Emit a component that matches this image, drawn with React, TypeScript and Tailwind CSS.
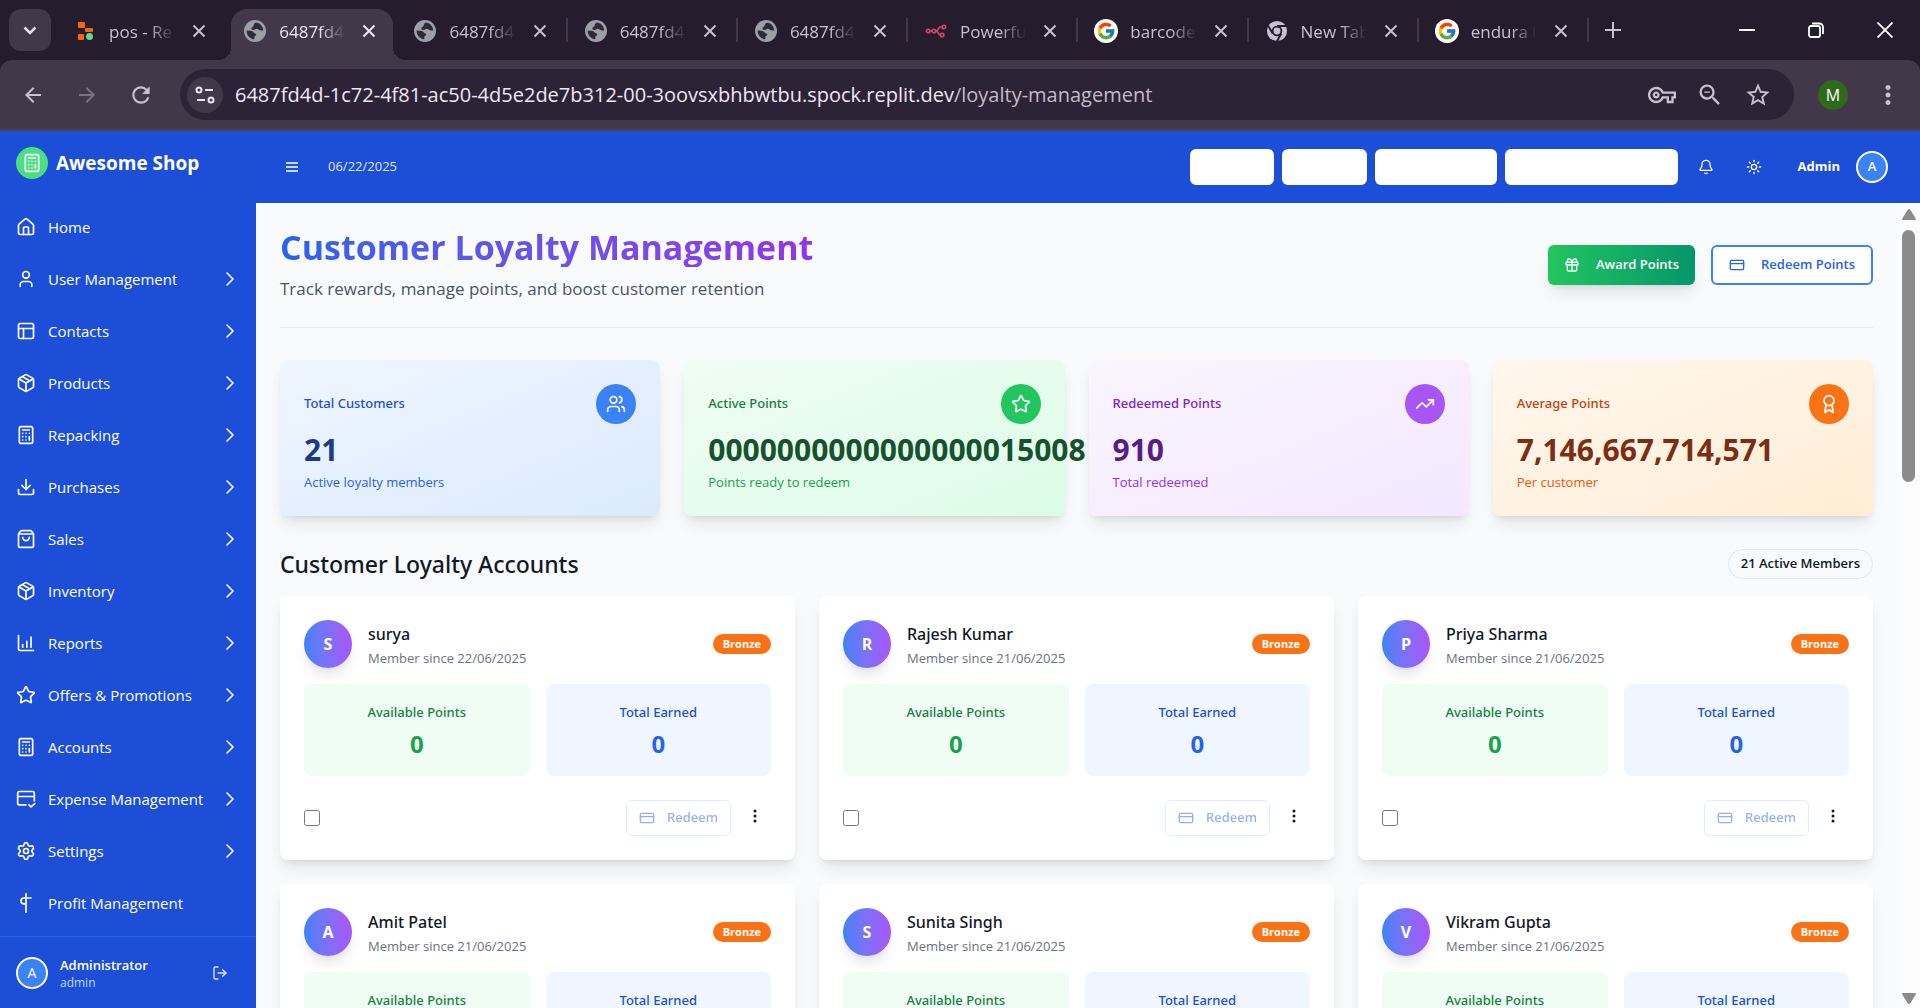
import React from "react";
import {
  Award,
  Bell,
  Calculator,
  ChevronRight,
  CreditCard,
  Download,
  Gift,
  House,
  LogOut,
  Package,
  PanelsTopLeft,
  Settings,
  ShoppingBag,
  Star,
  Sun,
  TrendingUp,
  User,
  Users,
} from "lucide-react";
import {
  MdArrowBack,
  MdArrowForward,
  MdMoreVert,
  MdOutlineVpnKey,
  MdRefresh,
  MdStarBorder,
  MdZoomOut,
} from "react-icons/md";
import { FcGoogle } from "react-icons/fc";

type IconProps = { className?: string };

function StrokeIcon({ className, children }: IconProps & { children: React.ReactNode }) {
  return (
    <svg
      viewBox="0 0 24 24"
      fill="none"
      stroke="currentColor"
      strokeWidth="2"
      strokeLinecap="round"
      strokeLinejoin="round"
      className={className}
      aria-hidden="true"
    >
      {children}
    </svg>
  );
}

const ReportsIcon = ({ className }: IconProps) => (
  <StrokeIcon className={className}>
    <path d="M3 3v16a2 2 0 0 0 2 2h16" />
    <path d="M8 17v-3M13 17v-7M18 17V5" />
  </StrokeIcon>
);

const CardCheckIcon = ({ className }: IconProps) => (
  <StrokeIcon className={className}>
    <path d="M12 19H4a2 2 0 0 1-2-2V5a2 2 0 0 1 2-2h16a2 2 0 0 1 2 2v9M2 9h20" />
    <path d="m15.500 19 2.500 2.500 4.500-4" />
  </StrokeIcon>
);

const ProfitIcon = ({ className }: IconProps) => (
  <StrokeIcon className={className}>
    <path d="M12 1v22M18 6H9.500a3.500 3.500 0 0 0 0 7H12" />
  </StrokeIcon>
);

const ReplitIcon = () => (
  <svg viewBox="0 0 18 20" className="h-5 w-[18px]" aria-hidden="true">
    <rect x="2" y="1" width="7" height="6" rx="1" fill="#f9650b" />
    <rect x="9" y="7" width="8" height="4" rx="1" fill="#f9650b" />
    <rect x="2" y="13" width="6" height="6" rx="1" fill="#f9650b" />
    <circle cx="13.500" cy="15.500" r="3.500" fill="#63dd87" />
  </svg>
);

const NodesIcon = () => (
  <svg viewBox="0 0 24 16" className="h-3.5 w-[22px]" fill="none" stroke="#d9456b" strokeWidth="1.800" aria-hidden="true">
    <circle cx="3" cy="8" r="2" />
    <circle cx="9.500" cy="8" r="2" />
    <circle cx="21" cy="3.500" r="2" />
    <circle cx="19" cy="12.500" r="2" />
    <path d="M5 8h2.500M19 3.500h-2c-3 0-1.500 4.500-5.500 4.500 4 0 2.500 4.500 5.500 4.500" />
  </svg>
);

const ChromeIcon = () => (
  <svg viewBox="0 0 24 24" className="size-[22px]" aria-hidden="true">
    <circle cx="12" cy="12" r="11" fill="#cbbfd6" />
    <circle cx="12" cy="12" r="4.800" fill="#cbbfd6" stroke="#251c2d" strokeWidth="2" />
    <path d="M12 6.500h10M7.300 14.800 2.300 6.200M16.800 14.800l-5 8.600" stroke="#251c2d" strokeWidth="2" />
  </svg>
);

const GlobeIcon = () => (
  <svg viewBox="0 0 22 22" className="size-[22px]" aria-hidden="true">
    <circle cx="11" cy="11" r="11" fill="#9aa0a6" />
    <path
      d="M12.500 2.500C9 3 10.500 6 8.500 7c-1.800.800-1.500 2.800.500 3 2.200.200 2.200-1.500 4-1.300 1.900.200 1.600 2.300 6.300 1.800-.300-4-3-7.300-6.800-8z"
      fill="#33293b"
    />
    <path
      d="M2.600 10.500c3 .200 5.900.200 6.900 1.800.900 1.600 2.800.700 2.800 2.300 0 1.500-2 1.200-2 2.600 0 .900.300 1.500-.200 2.100-4.300-.500-7.500-4.300-7.500-8.800z"
      fill="#33293b"
    />
  </svg>
);

const GoogleIcon = () => (
  <span className="flex size-6 items-center justify-center rounded-full bg-white">
    <FcGoogle className="size-5" aria-hidden="true" />
  </span>
);

const CrossIcon = ({ className }: IconProps) => (
  <svg viewBox="0 0 14 14" fill="none" stroke="currentColor" strokeWidth="2" className={className} aria-hidden="true">
    <path d="M1.500 1.500l11 11M12.500 1.500l-11 11" />
  </svg>
);

const tabs = [
  { title: "pos - Re", icon: ReplitIcon },
  { title: "6487fd4", icon: GlobeIcon, active: true },
  { title: "6487fd4", icon: GlobeIcon, divider: true },
  { title: "6487fd4", icon: GlobeIcon, divider: true },
  { title: "6487fd4", icon: GlobeIcon, divider: true },
  { title: "Powerfu", icon: NodesIcon, divider: true },
  { title: "barcode", icon: GoogleIcon, divider: true },
  { title: "New Tab", icon: ChromeIcon, divider: true },
  { title: "endura l", icon: GoogleIcon, divider: true },
];

function TabStrip() {
  return (
    <div className="flex h-[60px] items-start bg-[#251c2d]">
      <button
        aria-label="Search tabs"
        className="ml-[9px] mt-[9px] flex size-[42px] shrink-0 items-center justify-center rounded-xl bg-[#43384a] text-[#e6dcee]"
      >
        <svg viewBox="0 0 14 9" fill="none" stroke="currentColor" strokeWidth="2.500" className="h-[9px] w-3.5" aria-hidden="true">
          <path d="M1.500 1.500 7 7l5.500-5.500" />
        </svg>
      </button>
      <div role="tablist" className="ml-2.5 flex h-full min-w-0 flex-1 pt-[9px]">
        {tabs.map((tab, i) => {
          const Icon = tab.icon;
          return (
            <div key={i} className="relative min-w-0 flex-1">
              <div
                role="tab"
                aria-selected={!!tab.active}
                className={
                  tab.active
                    ? "relative mr-2 flex h-[51px] items-center rounded-t-2xl bg-[#43384a] pl-3 text-[#efe6f5]"
                    : "relative mr-2 flex h-[51px] items-center pl-3 text-[#cbbfd6]"
                }
              >
                {tab.active && (
                  <>
                    <span className="absolute -left-3 bottom-0 size-3 bg-[radial-gradient(circle_at_0_0,#251c2d_12px,#43384a_12px)]" />
                    <span className="absolute -right-3 bottom-0 size-3 bg-[radial-gradient(circle_at_100%_0,#251c2d_12px,#43384a_12px)]" />
                  </>
                )}
                <span className="flex w-6 shrink-0 justify-center pb-2">
                  <Icon />
                </span>
                <span className="ml-3 min-w-0 flex-1 whitespace-nowrap pb-1.5 text-[17px] leading-6 [mask-image:linear-gradient(to_right,black_60%,transparent)]">
                  {tab.title}
                </span>
                <button aria-label="Close tab" className="mb-2 flex w-12 shrink-0 justify-center">
                  <CrossIcon className="size-3.5" />
                </button>
              </div>
              {tab.divider && <span className="absolute right-1 top-[9px] h-6 w-0.5 bg-[#43384a]" />}
            </div>
          );
        })}
      </div>
      <button aria-label="New tab" className="flex h-[60px] w-10 items-center justify-center text-[#cbbfd6]">
        <svg viewBox="0 0 16 16" stroke="currentColor" strokeWidth="2" className="size-4" aria-hidden="true">
          <path d="M8 0v16M0 8h16" />
        </svg>
      </button>
      <div className="ml-[79px] flex h-[60px] items-center text-white">
        <button aria-label="Minimize" className="flex w-[69px] justify-center">
          <span className="h-0.5 w-4 bg-white" />
        </button>
        <button aria-label="Restore" className="flex w-[69px] justify-center">
          <svg viewBox="0 0 16 16" fill="none" stroke="currentColor" strokeWidth="1.800" className="size-4" aria-hidden="true">
            <rect x="1" y="4" width="11" height="11" rx="2" />
            <path d="M4 1.500h7.500a3.500 3.500 0 0 1 3.500 3.500V12" />
          </svg>
        </button>
        <button aria-label="Close" className="flex w-[70px] justify-center">
          <svg viewBox="0 0 16 16" stroke="currentColor" strokeWidth="1.800" className="size-4" aria-hidden="true">
            <path d="M.5.500l15 15M15.500.500l-15 15" />
          </svg>
        </button>
      </div>
    </div>
  );
}

function Toolbar() {
  return (
    <div className="bg-[#251c2d]">
      <div className="flex h-[71px] items-center rounded-t-xl border-b-2 border-[#4b4150] bg-[#43384a] text-[#cbbfd6]">
        <button aria-label="Back" className="ml-1.5 flex w-[54px] justify-center">
          <MdArrowBack className="size-6" />
        </button>
        <button aria-label="Forward" className="flex w-[54px] justify-center text-[#7d7184]">
          <MdArrowForward className="size-6" />
        </button>
        <button aria-label="Reload" className="flex w-[54px] justify-center">
          <MdRefresh className="size-[26px]" />
        </button>
        <div className="ml-3 flex h-[51px] min-w-0 flex-1 items-center rounded-full bg-[#2d2336]">
          <button
            aria-label="Site information"
            className="ml-[7px] flex size-9 shrink-0 items-center justify-center rounded-full bg-[#43384a] text-[#efe6f5]"
          >
            <svg viewBox="0 0 20 20" fill="none" stroke="currentColor" strokeWidth="2" className="size-5" aria-hidden="true">
              <circle cx="4" cy="5" r="2.500" />
              <path d="M10 5h8M2 15h8" />
              <circle cx="16" cy="15" r="2.500" />
            </svg>
          </button>
          <p className="ml-3 min-w-0 flex-1 truncate text-[20px] leading-7 text-[#efe6f5]">
            6487fd4d-1c72-4f81-ac50-4d5e2de7b312-00-3oovsxbhbwtbu.spock.replit.dev
            <span className="text-[#c3bac9]">/loyalty-management</span>
          </p>
          <div className="flex shrink-0 items-center text-[#c8c0cc]">
            <button aria-label="Passwords" className="flex w-12 justify-center">
              <MdOutlineVpnKey className="size-7" />
            </button>
            <button aria-label="Zoom" className="flex w-12 justify-center">
              <MdZoomOut className="size-7" />
            </button>
            <button aria-label="Bookmark" className="mr-3 flex w-12 justify-center">
              <MdStarBorder className="size-7" />
            </button>
          </div>
        </div>
        <button
          aria-label="Profile"
          className="ml-6 flex size-[30px] shrink-0 items-center justify-center rounded-full bg-[#2f6a1b] text-base text-white"
        >
          M
        </button>
        <button aria-label="Browser menu" className="ml-5 mr-3 flex w-10 justify-center">
          <MdMoreVert className="size-[30px]" />
        </button>
      </div>
    </div>
  );
}

const navItems = [
  { label: "Home", icon: House, leaf: true },
  { label: "User Management", icon: User },
  { label: "Contacts", icon: PanelsTopLeft },
  { label: "Products", icon: Package },
  { label: "Repacking", icon: Calculator },
  { label: "Purchases", icon: Download },
  { label: "Sales", icon: ShoppingBag },
  { label: "Inventory", icon: Package },
  { label: "Reports", icon: ReportsIcon },
  { label: "Offers & Promotions", icon: Star },
  { label: "Accounts", icon: Calculator },
  { label: "Expense Management", icon: CardCheckIcon },
  { label: "Settings", icon: Settings },
  { label: "Profit Management", icon: ProfitIcon, leaf: true },
];

function Sidebar() {
  return (
    <aside className="flex w-64 shrink-0 flex-col bg-[#1d4ed8] text-white">
      <div className="flex h-16 shrink-0 items-center gap-2 px-4">
        <span className="flex size-8 items-center justify-center rounded-full bg-[#4ade80]">
          <Calculator className="size-5" />
        </span>
        <span className="text-[19px] font-bold leading-7">Awesome Shop</span>
      </div>
      <nav className="flex flex-1 flex-col gap-1 py-2">
        {navItems.map(({ label, icon: Icon, leaf }) => (
          <a key={label} href="#" className="flex h-12 shrink-0 items-center px-4 text-[15px] font-medium">
            <Icon className="size-5" />
            <span className="ml-3 flex-1 whitespace-nowrap">{label}</span>
            {!leaf && <ChevronRight className="-mr-0.5 size-6" strokeWidth={1.6} />}
          </a>
        ))}
      </nav>
      <div className="flex h-[72px] shrink-0 items-center border-t border-[#2563eb] px-4">
        <span className="flex size-8 items-center justify-center rounded-full border-2 border-white bg-[#3b82f6] text-sm">
          A
        </span>
        <div className="ml-3 flex-1">
          <p className="text-[13px] font-semibold leading-5">Administrator</p>
          <p className="text-xs leading-4 text-[#bfdbfe]">admin</p>
        </div>
        <button aria-label="Log out" className="mr-3 text-[#dbeafe]">
          <LogOut className="size-4" />
        </button>
      </div>
    </aside>
  );
}

function TopBar() {
  return (
    <header className="flex h-[72px] shrink-0 items-center bg-[#1d4ed8] pl-7 pr-8 text-white">
      <button aria-label="Toggle menu" className="flex size-4 flex-col items-center justify-center gap-0.5">
        <span className="h-0.5 w-3 bg-[#bfdbfe]" />
        <span className="h-0.5 w-3 bg-[#bfdbfe]" />
        <span className="h-0.5 w-3 bg-[#bfdbfe]" />
      </button>
      <span className="ml-7 flex-1 text-[13px] text-[#dbeafe]">06/22/2025</span>
      <div className="flex items-center gap-2">
        <button aria-label="Action 1" className="h-9 w-[84px] rounded-md bg-white" />
        <button aria-label="Action 2" className="h-9 w-[85px] rounded-md bg-white" />
        <button aria-label="Action 3" className="h-9 w-[122px] rounded-md bg-white" />
        <button aria-label="Action 4" className="h-9 w-[173px] rounded-md bg-white" />
        <button aria-label="Notifications" className="flex size-10 items-center justify-center">
          <Bell className="size-4" />
        </button>
        <button aria-label="Toggle theme" className="flex size-10 items-center justify-center">
          <Sun className="size-4" />
        </button>
      </div>
      <span className="ml-6 text-[13px] font-bold">Admin</span>
      <span className="ml-4 flex size-8 items-center justify-center rounded-full border-2 border-white bg-[#3b82f6] text-[13px] font-semibold">
        A
      </span>
    </header>
  );
}

const stats = [
  {
    label: "Total Customers",
    value: "21",
    note: "Active loyalty members",
    icon: Users,
    card: "from-[#eff6ff] to-[#dbeafe]",
    labelColor: "text-[#1d4ed8]",
    valueColor: "text-[#1e3a8a]",
    noteColor: "text-[#2563eb]",
    dot: "bg-[#3b82f6]",
  },
  {
    label: "Active Points",
    value: "0000000000000000015008",
    note: "Points ready to redeem",
    icon: Star,
    card: "from-[#f0fdf4] to-[#dcfce7]",
    labelColor: "text-[#15803d]",
    valueColor: "text-[#14532d]",
    noteColor: "text-[#16a34a]",
    dot: "bg-[#22c55e]",
  },
  {
    label: "Redeemed Points",
    value: "910",
    note: "Total redeemed",
    icon: TrendingUp,
    card: "from-[#faf5ff] to-[#f3e8ff]",
    labelColor: "text-[#7e22ce]",
    valueColor: "text-[#581c87]",
    noteColor: "text-[#9333ea]",
    dot: "bg-[#a855f7]",
  },
  {
    label: "Average Points",
    value: "7,146,667,714,571",
    note: "Per customer",
    icon: Award,
    card: "from-[#fff7ed] to-[#ffedd5]",
    labelColor: "text-[#c2410c]",
    valueColor: "text-[#7c2d12]",
    noteColor: "text-[#ea580c]",
    dot: "bg-[#f97316]",
  },
];

function StatCard({ stat }: { stat: (typeof stats)[number] }) {
  const Icon = stat.icon;
  return (
    <div className={`relative min-w-0 rounded-lg bg-gradient-to-br p-6 shadow-lg ${stat.card}`}>
      <div className="flex items-center justify-between">
        <h3 className={`font-['Noto_Sans','Open_Sans',sans-serif] text-[13px] font-medium ${stat.labelColor}`}>
          {stat.label}
        </h3>
        <span className={`flex size-10 items-center justify-center rounded-full text-white ${stat.dot}`}>
          <Icon className="size-5" />
        </span>
      </div>
      <p className={`mt-2 text-[30px] font-bold leading-9 ${stat.valueColor}`}>{stat.value}</p>
      <p className={`mt-1 text-[13px] leading-5 ${stat.noteColor}`}>{stat.note}</p>
    </div>
  );
}

const members = [
  { name: "surya", since: "22/06/2025" },
  { name: "Rajesh Kumar", since: "21/06/2025" },
  { name: "Priya Sharma", since: "21/06/2025" },
  { name: "Amit Patel", since: "21/06/2025" },
  { name: "Sunita Singh", since: "21/06/2025" },
  { name: "Vikram Gupta", since: "21/06/2025" },
];

function MemberCard({ name, since }: { name: string; since: string }) {
  return (
    <article className="rounded-lg bg-white p-6 shadow-lg">
      <div className="flex items-center">
        <span className="flex size-12 items-center justify-center rounded-full bg-gradient-to-r from-[#3b82f6] to-[#a855f7] text-base font-bold text-white shadow-lg">
          {name[0].toUpperCase()}
        </span>
        <div className="ml-4 flex-1">
          <h3 className="font-['Noto_Sans','Open_Sans',sans-serif] text-base font-medium leading-7 text-[#111827]">
            {name}
          </h3>
          <p className="text-[13px] leading-5 text-[#6b7280]">Member since {since}</p>
        </div>
        <span className="flex h-5 items-center rounded-full bg-[#f97316] px-2.5 text-[11px] font-bold text-white">
          Bronze
        </span>
      </div>
      <div className="mt-4 grid grid-cols-2 gap-4 text-center">
        <div className="rounded-lg bg-[#f0fdf4] p-4">
          <p className="font-['Noto_Sans','Open_Sans',sans-serif] text-[13px] font-medium leading-6 text-[#15803d]">
            Available Points
          </p>
          <p className="mt-1 text-2xl font-bold text-[#16a34a]">0</p>
        </div>
        <div className="rounded-lg bg-[#eff6ff] p-4">
          <p className="font-['Noto_Sans','Open_Sans',sans-serif] text-[13px] font-medium leading-6 text-[#1d4ed8]">
            Total Earned
          </p>
          <p className="mt-1 text-2xl font-bold text-[#2563eb]">0</p>
        </div>
      </div>
      <div className="mt-6 flex items-center">
        <input type="checkbox" aria-label={`Select ${name}`} className="size-4" />
        <button
          disabled
          className="ml-auto flex h-9 items-center gap-3 rounded-md border border-[#bfdbfe] px-3 font-['Noto_Sans','Open_Sans',sans-serif] text-[13px] font-medium text-[#2563eb] opacity-50"
        >
          <CreditCard className="size-4" />
          Redeem
        </button>
        <button aria-label={`More actions for ${name}`} className="ml-2 flex h-9 w-8 items-center justify-center text-[#111827]">
          <svg viewBox="0 0 4 14" fill="currentColor" className="mb-1 h-3.5 w-1" aria-hidden="true">
            <circle cx="2" cy="2" r="1.500" />
            <circle cx="2" cy="7" r="1.500" />
            <circle cx="2" cy="12" r="1.500" />
          </svg>
        </button>
      </div>
    </article>
  );
}

function LoyaltyPage() {
  return (
    <main className="min-w-0 flex-1 overflow-hidden bg-[#f9fafc] p-6">
      <div className="flex items-center justify-between border-b border-[#e5e7eb] pb-6">
        <div>
          <h1 className="bg-gradient-to-r from-[#2563eb] to-[#9333ea] bg-clip-text text-[34px] font-bold leading-10 text-transparent">
            Customer Loyalty Management
          </h1>
          <p className="mt-2 text-[17px] leading-7 text-[#4b5563]">
            Track rewards, manage points, and boost customer retention
          </p>
        </div>
        <div className="flex gap-4">
          <button className="flex h-10 items-center gap-4 rounded-md bg-gradient-to-r from-[#22c55e] to-[#059669] px-4 text-[13px] font-semibold text-white shadow-lg">
            <Gift className="size-4" />
            Award Points
          </button>
          <button className="flex h-10 items-center gap-4 rounded-md border-2 border-[#3b82f6] bg-white px-4 text-[13px] font-semibold text-[#2563eb]">
            <CreditCard className="size-4" />
            Redeem Points
          </button>
        </div>
      </div>
      <div className="mt-8 grid grid-cols-4 gap-6">
        {stats.map((stat) => (
          <StatCard key={stat.label} stat={stat} />
        ))}
      </div>
      <div className="mt-8 flex h-8 items-center justify-between">
        <h2 className="font-['Noto_Sans','Open_Sans',sans-serif] text-[23px] font-medium leading-8 text-[#111827]">
          Customer Loyalty Accounts
        </h2>
        <span className="flex h-[30px] items-center rounded-full border border-[#e5e7eb] px-3 text-[13px] font-semibold text-[#111827]">
          21 Active Members
        </span>
      </div>
      <div className="mt-4 grid grid-cols-3 gap-6">
        {members.map((member) => (
          <MemberCard key={member.name} {...member} />
        ))}
      </div>
    </main>
  );
}

function ScrollRail() {
  return (
    <div className="flex w-[23px] shrink-0 flex-col items-center bg-[#fcfcfc] text-[#8b8b8b]" aria-hidden="true">
      <svg viewBox="0 0 14 11" fill="currentColor" className="mt-1.5 h-[11px] w-3.5">
        <path d="M7 0q1 0 1.500 1L14 10q0 1-1 1H1q-1 0-1-1l5.500-9Q6 0 7 0z" />
      </svg>
      <span className="mt-2.5 h-[252px] w-[13px] rounded-full bg-[#8b8b8b]" />
      <svg viewBox="0 0 14 11" fill="currentColor" className="mb-1 mt-auto h-[11px] w-3.5">
        <path d="M7 11q-1 0-1.500-1L0 1q0-1 1-1h12q1 0 1 1l-5.500 9q-.5 1-1.500 1z" />
      </svg>
    </div>
  );
}

export default function App() {
  return (
    <div className="flex h-screen flex-col overflow-hidden font-['Open_Sans','Noto_Sans',sans-serif]">
      <TabStrip />
      <Toolbar />
      <div className="flex min-h-0 flex-1">
        <Sidebar />
        <div className="flex min-w-0 flex-1 flex-col">
          <TopBar />
          <div className="flex min-h-0 flex-1">
            <LoyaltyPage />
            <ScrollRail />
          </div>
        </div>
      </div>
    </div>
  );
}
